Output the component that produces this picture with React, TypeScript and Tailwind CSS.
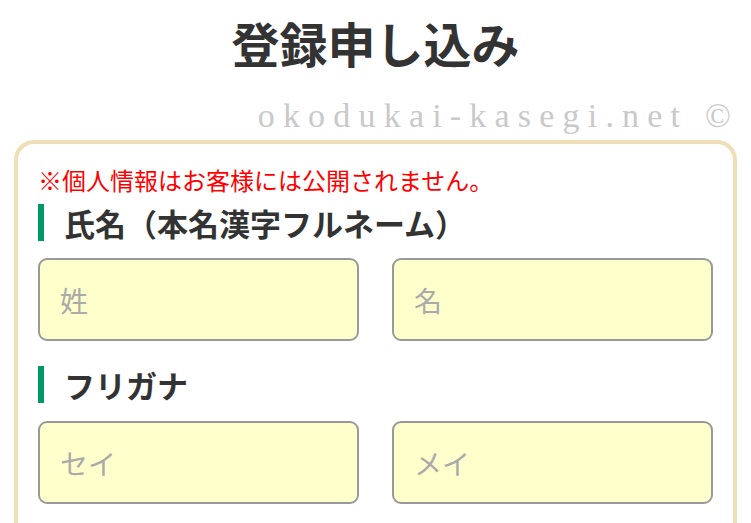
export default function App() {
  return (
    <div
      className="min-h-screen bg-white"
      style={{ fontFamily: '"Noto Sans CJK JP", "Noto Sans", sans-serif' }}
    >
      <h1 className="pt-[18px] text-center text-[48px] leading-[48px] font-bold text-[#333]">
        登録申し込み
      </h1>

      <div className="mt-[30px] flex justify-end pr-[12px]">
        <p className="font-['Liberation_Serif',serif] text-[34px] leading-[40px] tracking-[8.2px] text-[#c9c9c9]">
          okodukai-kasegi.net ©
        </p>
      </div>

      <div className="mx-[14px] mt-[4px] rounded-t-[20px] border-4 border-b-0 border-[#eedfb6] px-5 pt-[19px] pb-[20px]">
        <p className="text-[24px] leading-[34px] text-[#ff0000]">
          ※個人情報はお客様には公開されません。
        </p>

        <h2 className="mt-[7px] border-l-[6px] border-[#009966] pl-[20px] text-[31px] leading-[37px] font-bold text-[#333]">
          氏名（本名漢字フルネーム）
        </h2>
        <div className="mt-[17px] grid grid-cols-2 gap-[33px]">
          <input
            placeholder="姓"
            className="h-[83px] w-full rounded-[9px] border-2 border-[#999] bg-[#ffffcc] px-[20px] text-[28px] text-[#333] placeholder:text-[#aaa] focus:outline-none"
          />
          <input
            placeholder="名"
            className="h-[83px] w-full rounded-[9px] border-2 border-[#999] bg-[#ffffcc] px-[20px] text-[28px] text-[#333] placeholder:text-[#aaa] focus:outline-none"
          />
        </div>

        <h2 className="mt-[25px] border-l-[6px] border-[#009966] pl-[20px] text-[31px] leading-[37px] font-bold text-[#333]">
          フリガナ
        </h2>
        <div className="mt-[18px] grid grid-cols-2 gap-[33px]">
          <input
            placeholder="セイ"
            className="h-[83px] w-full rounded-[9px] border-2 border-[#999] bg-[#ffffcc] px-[20px] text-[28px] text-[#333] placeholder:text-[#aaa] focus:outline-none"
          />
          <input
            placeholder="メイ"
            className="h-[83px] w-full rounded-[9px] border-2 border-[#999] bg-[#ffffcc] px-[20px] text-[28px] text-[#333] placeholder:text-[#aaa] focus:outline-none"
          />
        </div>
      </div>
    </div>
  );
}
